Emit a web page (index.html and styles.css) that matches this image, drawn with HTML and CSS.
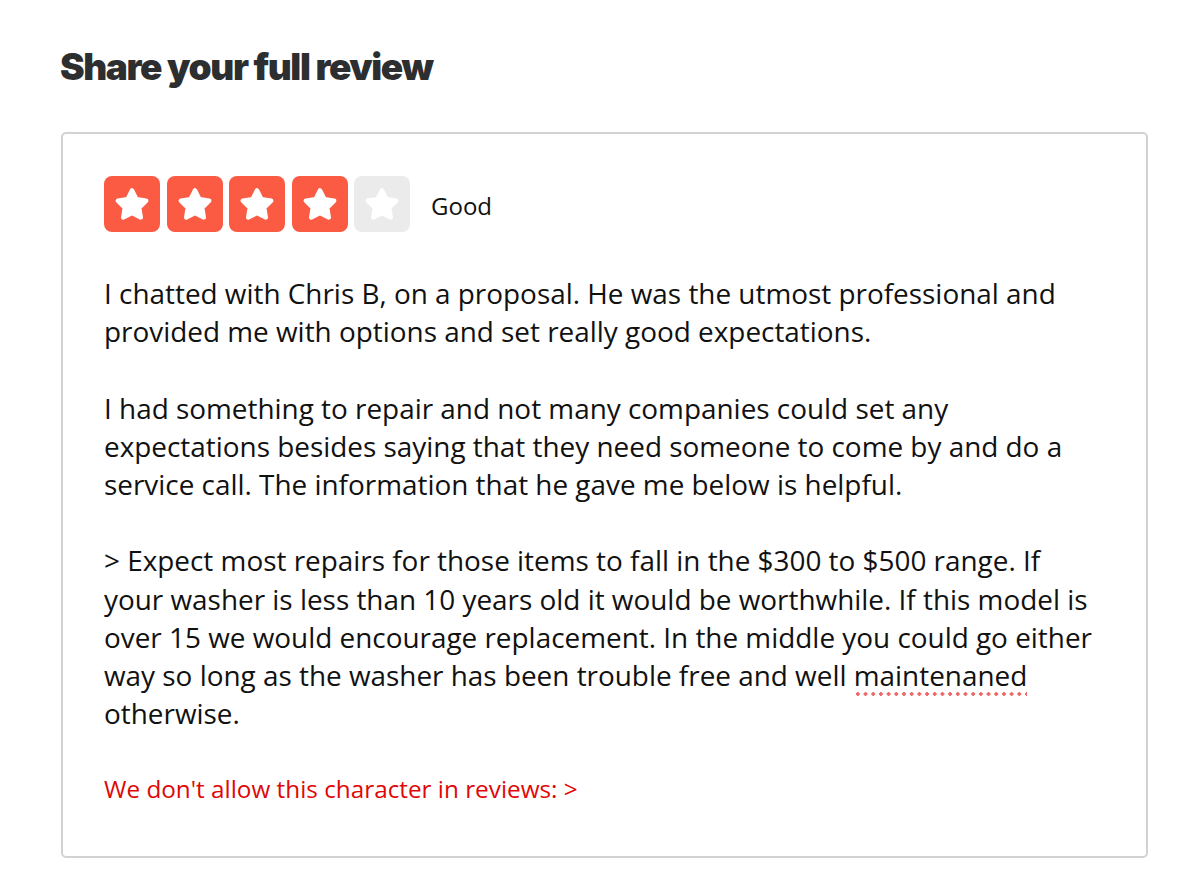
FILE: index.html
```html
<!DOCTYPE html>
<html>
<head>
<meta charset="utf-8">
<link rel="stylesheet" href="styles.css">
</head>
<body>
<div class="page">
  <h1 class="title">Share your full review</h1>
  <div class="card">
    <div class="rating">
      <div class="stars">
        <span class="star on"><svg viewBox="0 0 24 24"><path d="M12 3.8L14.7 9.08L20.56 10.02L16.37 14.22L17.29 20.08L12 17.4L6.71 20.08L7.63 14.22L3.44 10.02L9.3 9.08Z"/></svg></span>
        <span class="star on"><svg viewBox="0 0 24 24"><path d="M12 3.8L14.7 9.08L20.56 10.02L16.37 14.22L17.29 20.08L12 17.4L6.71 20.08L7.63 14.22L3.44 10.02L9.3 9.08Z"/></svg></span>
        <span class="star on"><svg viewBox="0 0 24 24"><path d="M12 3.8L14.7 9.08L20.56 10.02L16.37 14.22L17.29 20.08L12 17.4L6.71 20.08L7.63 14.22L3.44 10.02L9.3 9.08Z"/></svg></span>
        <span class="star on"><svg viewBox="0 0 24 24"><path d="M12 3.8L14.7 9.08L20.56 10.02L16.37 14.22L17.29 20.08L12 17.4L6.71 20.08L7.63 14.22L3.44 10.02L9.3 9.08Z"/></svg></span>
        <span class="star off"><svg viewBox="0 0 24 24"><path d="M12 3.8L14.7 9.08L20.56 10.02L16.37 14.22L17.29 20.08L12 17.4L6.71 20.08L7.63 14.22L3.44 10.02L9.3 9.08Z"/></svg></span>
      </div>
      <span class="rating-label">Good</span>
    </div>
    <div class="review">I chatted with Chris B, on a proposal. He was the utmost professional and
provided me with options and set really good expectations.

I had something to repair and not many companies could set any
expectations besides saying that they need someone to come by and do a
service call. The information that he gave me below is helpful.

&gt; Expect most repairs for those items to fall in the $300 to $500 range. If
your washer is less than 10 years old it would be worthwhile. If this model is
over 15 we would encourage replacement. In the middle you could go either
way so long as the washer has been trouble free and well <span class="misspelled">maintenaned</span>
otherwise.</div>
    <p class="error">We don't allow this character in reviews: &gt;</p>
  </div>
</div>
</body>
</html>
```
FILE: styles.css
```css
html, body {
  margin: 0;
  padding: 0;
  background: #fff;
}
.page {
  padding: 45.5px 52px 0 61px;
}
.title {
  margin: 0 0 0 -1px;
  font-family: Inter, "Liberation Sans", sans-serif;
  font-weight: 900;
  font-size: 37px;
  line-height: 42px;
  letter-spacing: -1.4px;
  color: #2d2e2f;
}
.card {
  margin-top: 44.5px;
  border: 2px solid #d2d2d2;
  border-radius: 5px;
  padding: 42px 40px 52px 41px;
  font-family: "Open Sans", sans-serif;
  color: #111;
}
.rating {
  display: flex;
  align-items: center;
  gap: 21px;
}
.stars {
  display: flex;
  gap: 6.5px;
}
.star {
  width: 56px;
  height: 56px;
  border-radius: 8px;
  display: flex;
  align-items: center;
  justify-content: center;
}
.star.on { background: #fb5a43; }
.star.off { background: #ebebeb; }
.star svg {
  width: 40px;
  height: 40px;
  fill: #fff;
  stroke: #fff;
  stroke-width: 2.6;
  stroke-linejoin: round;
}
.rating-label {
  font-size: 24px;
  color: #111;
  margin-top: 2px;
}
.review {
  margin-top: 42px;
  white-space: pre-wrap;
  font-size: 27.9px;
  line-height: 38.2px;
  color: #111;
}
.misspelled {
  position: relative;
}
.misspelled::after {
  content: "";
  position: absolute;
  left: 0;
  right: 0;
  bottom: -2px;
  height: 4px;
  background-image: radial-gradient(circle, #f06a6a 1.6px, transparent 1.9px);
  background-size: 7.7px 4px;
  background-repeat: repeat-x;
}
.error {
  margin: 42px 0 0;
  font-size: 24.3px;
  line-height: 30px;
  color: #e00707;
}
```
